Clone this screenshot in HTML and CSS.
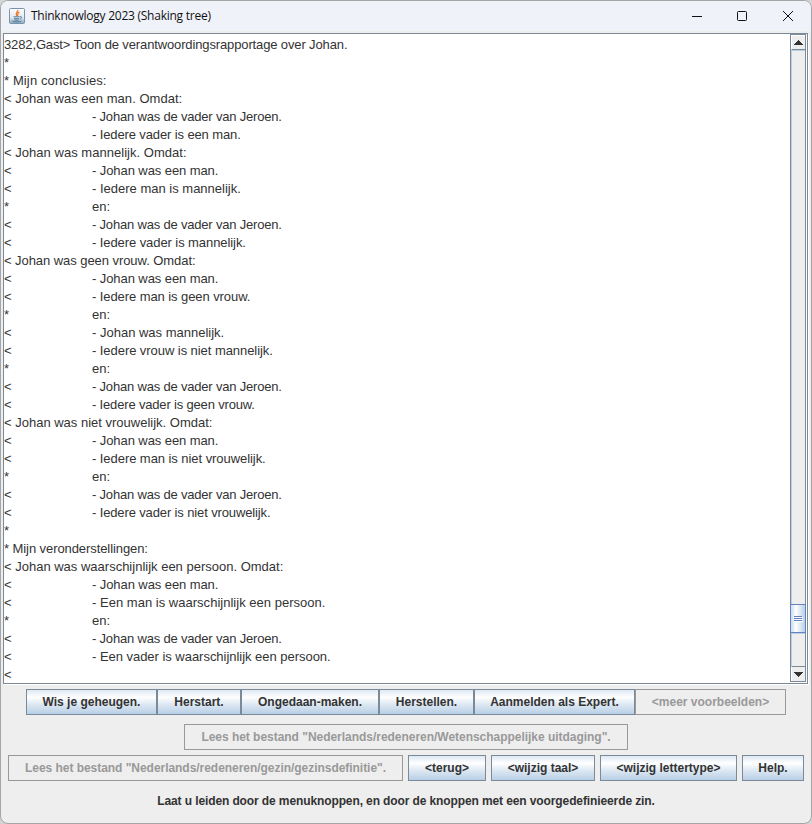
FILE: index.html
```html
<!DOCTYPE html>
<html lang="nl">
<head>
<meta charset="utf-8">
<title>Thinknowlogy 2023 (Shaking tree)</title>
<link rel="stylesheet" href="styles.css">
</head>
<body>
<div class="window">
  <header class="titlebar">
    <svg class="app-icon" width="16" height="16" viewBox="0 0 16 16">
      <defs><linearGradient id="tile" x1="0" y1="0" x2="0" y2="1"><stop offset="0" stop-color="#fdfdfe"/><stop offset=".6" stop-color="#e4e9ee"/><stop offset="1" stop-color="#8ba5b9"/></linearGradient></defs>
      <rect x=".5" y=".5" width="15" height="15" rx="1" fill="url(#tile)" stroke="#7893a9"/>
      <path d="M8.7 2C9.2 4 5.6 4.8 7.8 8M10.4 4.2C7.5 5.4 9.7 6.2 8.3 8" fill="none" stroke="#e8782b" stroke-width="1.3"/>
      <path d="M4.5 8.8h6.2M5 10.7h5M5.5 12.2h4M11 8.7c2.4-.5 2 2-.3 2.3M3.2 12.9c1.6 1.4 7.7 1.2 9.2 0" fill="none" stroke="#4d7b9c" stroke-width="1"/>
    </svg>
    <span class="title">Thinknowlogy 2023 (Shaking tree)</span>
    <svg class="controls" width="104" height="12" viewBox="0 0 104 12" fill="none" stroke="#111" stroke-width="1">
      <path d="M0 6.5h10"/>
      <rect x="45.5" y="1.5" width="9" height="9" rx="1"/>
      <path d="M91 1l10 10M101 1L91 11"/>
    </svg>
  </header>
  <main class="scrollpane">
    <div class="output">
      <p class="t13">3282,Gast&gt; Toon de verantwoordingsrapportage over Johan.</p>
      <p>*</p>
      <p class="w8">* Mijn conclusies:</p>
      <p class="w4">&lt; Johan was een man. Omdat:</p>
      <p class="t20">&lt;	- Johan was de vader van Jeroen.</p>
      <p class="t12">&lt;	- Iedere vader is een man.</p>
      <p class="w4">&lt; Johan was mannelijk. Omdat:</p>
      <p class="t10">&lt;	- Johan was een man.</p>
      <p>&lt;	- Iedere man is mannelijk.</p>
      <p>*	en:</p>
      <p class="t20">&lt;	- Johan was de vader van Jeroen.</p>
      <p class="t10">&lt;	- Iedere vader is mannelijk.</p>
      <p class="t6">&lt; Johan was geen vrouw. Omdat:</p>
      <p class="t10">&lt;	- Johan was een man.</p>
      <p class="t10">&lt;	- Iedere man is geen vrouw.</p>
      <p>*	en:</p>
      <p>&lt;	- Johan was mannelijk.</p>
      <p class="t6">&lt;	- Iedere vrouw is niet mannelijk.</p>
      <p>*	en:</p>
      <p class="t20">&lt;	- Johan was de vader van Jeroen.</p>
      <p class="t18">&lt;	- Iedere vader is geen vrouw.</p>
      <p>&lt; Johan was niet vrouwelijk. Omdat:</p>
      <p class="t10">&lt;	- Johan was een man.</p>
      <p class="t6">&lt;	- Iedere man is niet vrouwelijk.</p>
      <p>*	en:</p>
      <p class="t20">&lt;	- Johan was de vader van Jeroen.</p>
      <p class="t13">&lt;	- Iedere vader is niet vrouwelijk.</p>
      <p>*</p>
      <p class="t10">* Mijn veronderstellingen:</p>
      <p>&lt; Johan was waarschijnlijk een persoon. Omdat:</p>
      <p class="t10">&lt;	- Johan was een man.</p>
      <p class="w2">&lt;	- Een man is waarschijnlijk een persoon.</p>
      <p>*	en:</p>
      <p class="t20">&lt;	- Johan was de vader van Jeroen.</p>
      <p class="t3">&lt;	- Een vader is waarschijnlijk een persoon.</p>
      <p>&lt;</p>
    </div>
    <div class="scrollbar">
      <div class="arrow up"><svg width="9" height="5" viewBox="0 0 9 5" shape-rendering="crispEdges"><path d="M4 0h1v1h1v1h1v1h1v1h1v1H0V4h1V3h1V2h1V1h1z" fill="#333"/></svg></div>
      <div class="track"></div>
      <div class="thumb"><i></i><i></i><i></i></div>
      <div class="track rest"></div>
      <div class="arrow down"><svg width="9" height="5" viewBox="0 0 9 5" shape-rendering="crispEdges"><path d="M0 0h9v1H8v1H7v1H6v1H5v1H4V4H3V3H2V2H1V1H0z" fill="#333"/></svg></div>
    </div>
  </main>
  <footer class="panel">
    <div class="row joined">
      <button class="b131">Wis je geheugen.</button><button class="b84">Herstart.</button><button class="b138">Ongedaan-maken.</button><button class="b95">Herstellen.</button><button class="b161">Aanmelden als Expert.</button><button class="b151" disabled>&lt;meer voorbeelden&gt;</button>
    </div>
    <div class="row middle">
      <button class="b444" disabled>Lees het bestand "Nederlands/redeneren/Wetenschappelijke uitdaging".</button>
    </div>
    <div class="row spaced">
      <button class="b395" disabled>Lees het bestand "Nederlands/redeneren/gezin/gezinsdefinitie".</button>
      <button class="b78">&lt;terug&gt;</button>
      <button class="b104">&lt;wijzig taal&gt;</button>
      <button class="b137">&lt;wijzig lettertype&gt;</button>
      <button class="b62">Help.</button>
    </div>
    <p class="hint">Laat u leiden door de menuknoppen, en door de knoppen met een voorgedefinieerde zin.</p>
  </footer>
</div>
</body>
</html>
```
FILE: styles.css
```css
* { box-sizing: border-box; }
html { background: #d4d4d4; }
body { margin: 0; height: 824px; overflow: hidden; font-family: "Liberation Sans", Arial, sans-serif; color: #333; }
p { margin: 0; }
.window { width: 812px; height: 824px; border: 1px solid #a5a5a7; border-radius: 8px; background: #eee; overflow: hidden; display: flex; flex-direction: column; }
.titlebar { height: 30px; background: #f0f2f9; display: flex; align-items: center; padding: 0 15px 0 8px; flex: none; }
.title { margin-left: 6px; font: 12px/16px "Open Sans", sans-serif; letter-spacing: -0.25px; color: #111; flex: 1; }
.app-icon, .controls { display: block; flex: none; }
.scrollpane { margin: 2px 3px 0 2px; height: 651px; flex: none; display: flex; border: 1px solid #7a8a99; background: #fff; box-shadow: 1px 1px #fff; }
.output { flex: 1; height: 649px; overflow: hidden; padding-top: 2px; font-size: 13px; line-height: 18px; }
.output p { height: 18px; white-space: pre; tab-size: 88px; }
.t3 { letter-spacing: -0.03px; }
.t6 { letter-spacing: -0.06px; }
.t10 { letter-spacing: -0.08px; }
.t12 { letter-spacing: -0.12px; }
.t13 { letter-spacing: -0.13px; }
.t18 { letter-spacing: -0.17px; }
.t20 { letter-spacing: -0.19px; }
.w2 { letter-spacing: 0.02px; }
.w4 { letter-spacing: 0.03px; }
.w8 { letter-spacing: 0.12px; }
.scrollbar { width: 16px; height: 648px; margin-right: 1px; border: 1px solid #7a8a99; display: flex; flex-direction: column; background: #eee; }
.arrow { height: 15px; flex: none; display: flex; align-items: center; justify-content: center; border: 1px solid #fff; border-right: 0; background: #eee; }
.up { border-bottom-color: #7a8a99; }
.down { border-top-color: #7a8a99; border-bottom: 0; padding-top: 1px; }
.track { flex: 1; border-left: 1px solid #b8cfe5; border-top: 1px solid #b8cfe5; }
.track.rest { flex: 0 0 33px; }
.thumb { height: 29px; flex: none; margin: 0 -1px; border: 1px solid #6382bf; background: linear-gradient(90deg, #c8dcef, #fff 35%, #b8cfe5); display: flex; flex-direction: column; align-items: center; justify-content: center; gap: 1px; }
.thumb i { width: 8px; height: 1px; background: #6382bf; box-shadow: 1px 1px #fff; }
.panel { padding-top: 5px; }
.row { display: flex; justify-content: center; }
.middle { margin-top: 9px; }
.spaced { margin-top: 5px; gap: 5px; }
button { height: 26px; padding: 1px 0 0; border: 1px solid #7a8a99; border-radius: 0; background: linear-gradient(#dde8f3, #fff 30%, #dde8f3 60%, #b8cfe5); color: #333; font: bold 12px/23px "Liberation Sans", Arial, sans-serif; white-space: nowrap; flex: none; }
button:disabled { background: #eee; border-color: #999; color: #999; }
.b131 { width: 131px; } .b84 { width: 84px; } .b138 { width: 138px; } .b95 { width: 95px; } .b161 { width: 161px; } .b151 { width: 151px; }
.b444 { width: 444px; letter-spacing: -0.03px; } .b395 { width: 395px; letter-spacing: -0.04px; } .b78 { width: 78px; } .b104 { width: 104px; } .b137 { width: 137px; } .b62 { width: 62px; }
.hint { margin-top: 12px; text-align: center; font-weight: bold; font-size: 12px; line-height: 16px; letter-spacing: -0.11px; }
```
